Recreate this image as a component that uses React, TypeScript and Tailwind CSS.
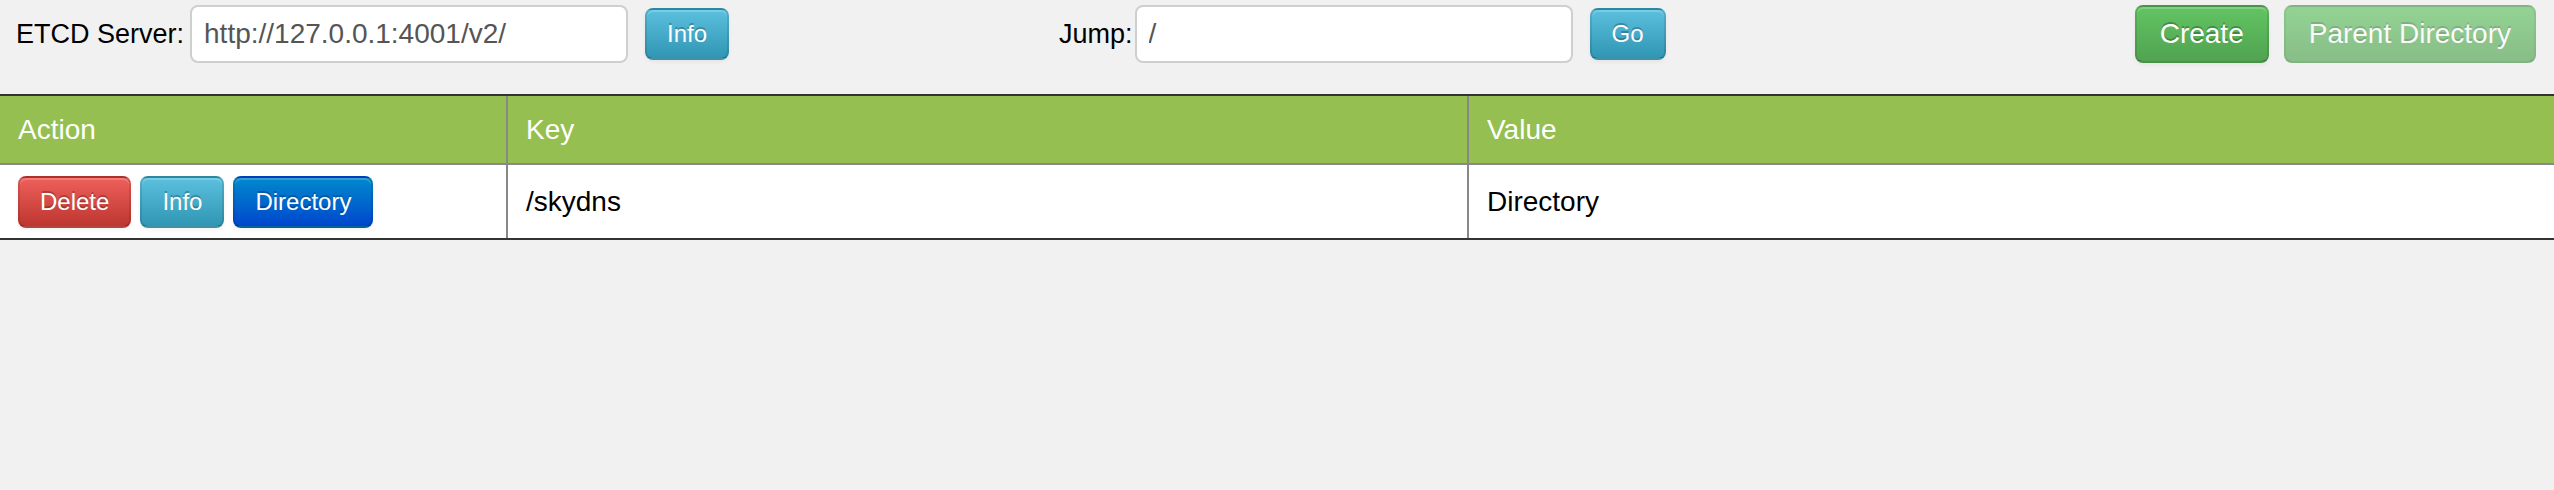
const font = "font-['Liberation_Sans','Helvetica_Neue',Arial,sans-serif]";

const btnBase =
  "flex items-center justify-center rounded-[8px] border-2 border-black/10 border-b-black/25 text-white shadow-[inset_0_2px_0_rgba(255,255,255,0.2),0_2px_4px_rgba(0,0,0,0.05)] [text-shadow:0_-2px_0_rgba(0,0,0,0.25)] bg-linear-to-b";

const small = "h-[52px] px-[20px] text-[24px]";
const large = "h-[58px] px-[23px] text-[28px]";

const tones = {
  info: "from-[#5bc0de] to-[#2f96b4]",
  danger: "from-[#ee5f5b] to-[#bd362f]",
  primary: "from-[#0088cc] to-[#0044cc]",
  success: "from-[#62c462] to-[#51a351]",
};

function Btn({ tone, size, children, disabled }: { tone: keyof typeof tones; size: "small" | "large"; children: string; disabled?: boolean }) {
  return (
    <button
      type="button"
      disabled={disabled}
      className={`${btnBase} ${tones[tone]} ${size === "small" ? small : large} ${disabled ? "opacity-65 shadow-none" : ""} ${font}`}
    >
      {children}
    </button>
  );
}

function Field({ value, className }: { value: string; className?: string }) {
  return (
    <input
      readOnly
      value={value}
      className={`h-[58px] w-[438px] rounded-[8px] border-2 border-[#cfcfcf] bg-white px-[12px] text-[28px] text-[#555] outline-none ${font} ${className ?? ""}`}
    />
  );
}

export default function App() {
  return (
    <div className={`min-h-screen bg-[#f1f1f1] text-black ${font}`}>
      <div className="flex h-[94px] items-start pt-[5px] pr-[18px]">
        <div className="flex h-[58px] w-[1059px] items-center pl-[16px]">
          <span className="text-[27px]">ETCD Server:</span>
          <Field value="http://127.0.0.1:4001/v2/" className="ml-[6px]" />
          <div className="ml-[17px]">
            <Btn tone="info" size="small">Info</Btn>
          </div>
        </div>
        <div className="flex h-[58px] items-center">
          <span className="text-[27px]">Jump:</span>
          <Field value="/" className="ml-[2px]" />
          <div className="ml-[17px]">
            <Btn tone="info" size="small">Go</Btn>
          </div>
        </div>
        <div className="ml-auto flex h-[58px] items-center gap-[15px]">
          <Btn tone="success" size="large">Create</Btn>
          <Btn tone="success" size="large" disabled>Parent Directory</Btn>
        </div>
      </div>

      <div className="border-y-2 border-[#333]">
        <div className="grid h-[69px] grid-cols-[508px_961px_1fr] border-b-2 border-[#888] bg-[#95bf50] text-[28px] text-white">
          <div className="flex items-center border-r-2 border-[#888] pl-[18px]">Action</div>
          <div className="flex items-center border-r-2 border-[#888] pl-[18px]">Key</div>
          <div className="flex items-center pl-[18px]">Value</div>
        </div>
        <div className="grid h-[73px] grid-cols-[508px_961px_1fr] bg-white text-[28px]">
          <div className="flex items-center gap-[9px] border-r-2 border-[#888] pl-[18px]">
            <Btn tone="danger" size="small">Delete</Btn>
            <Btn tone="info" size="small">Info</Btn>
            <Btn tone="primary" size="small">Directory</Btn>
          </div>
          <div className="flex items-center border-r-2 border-[#888] pl-[18px]">/skydns</div>
          <div className="flex items-center pl-[18px]">Directory</div>
        </div>
      </div>
    </div>
  );
}
